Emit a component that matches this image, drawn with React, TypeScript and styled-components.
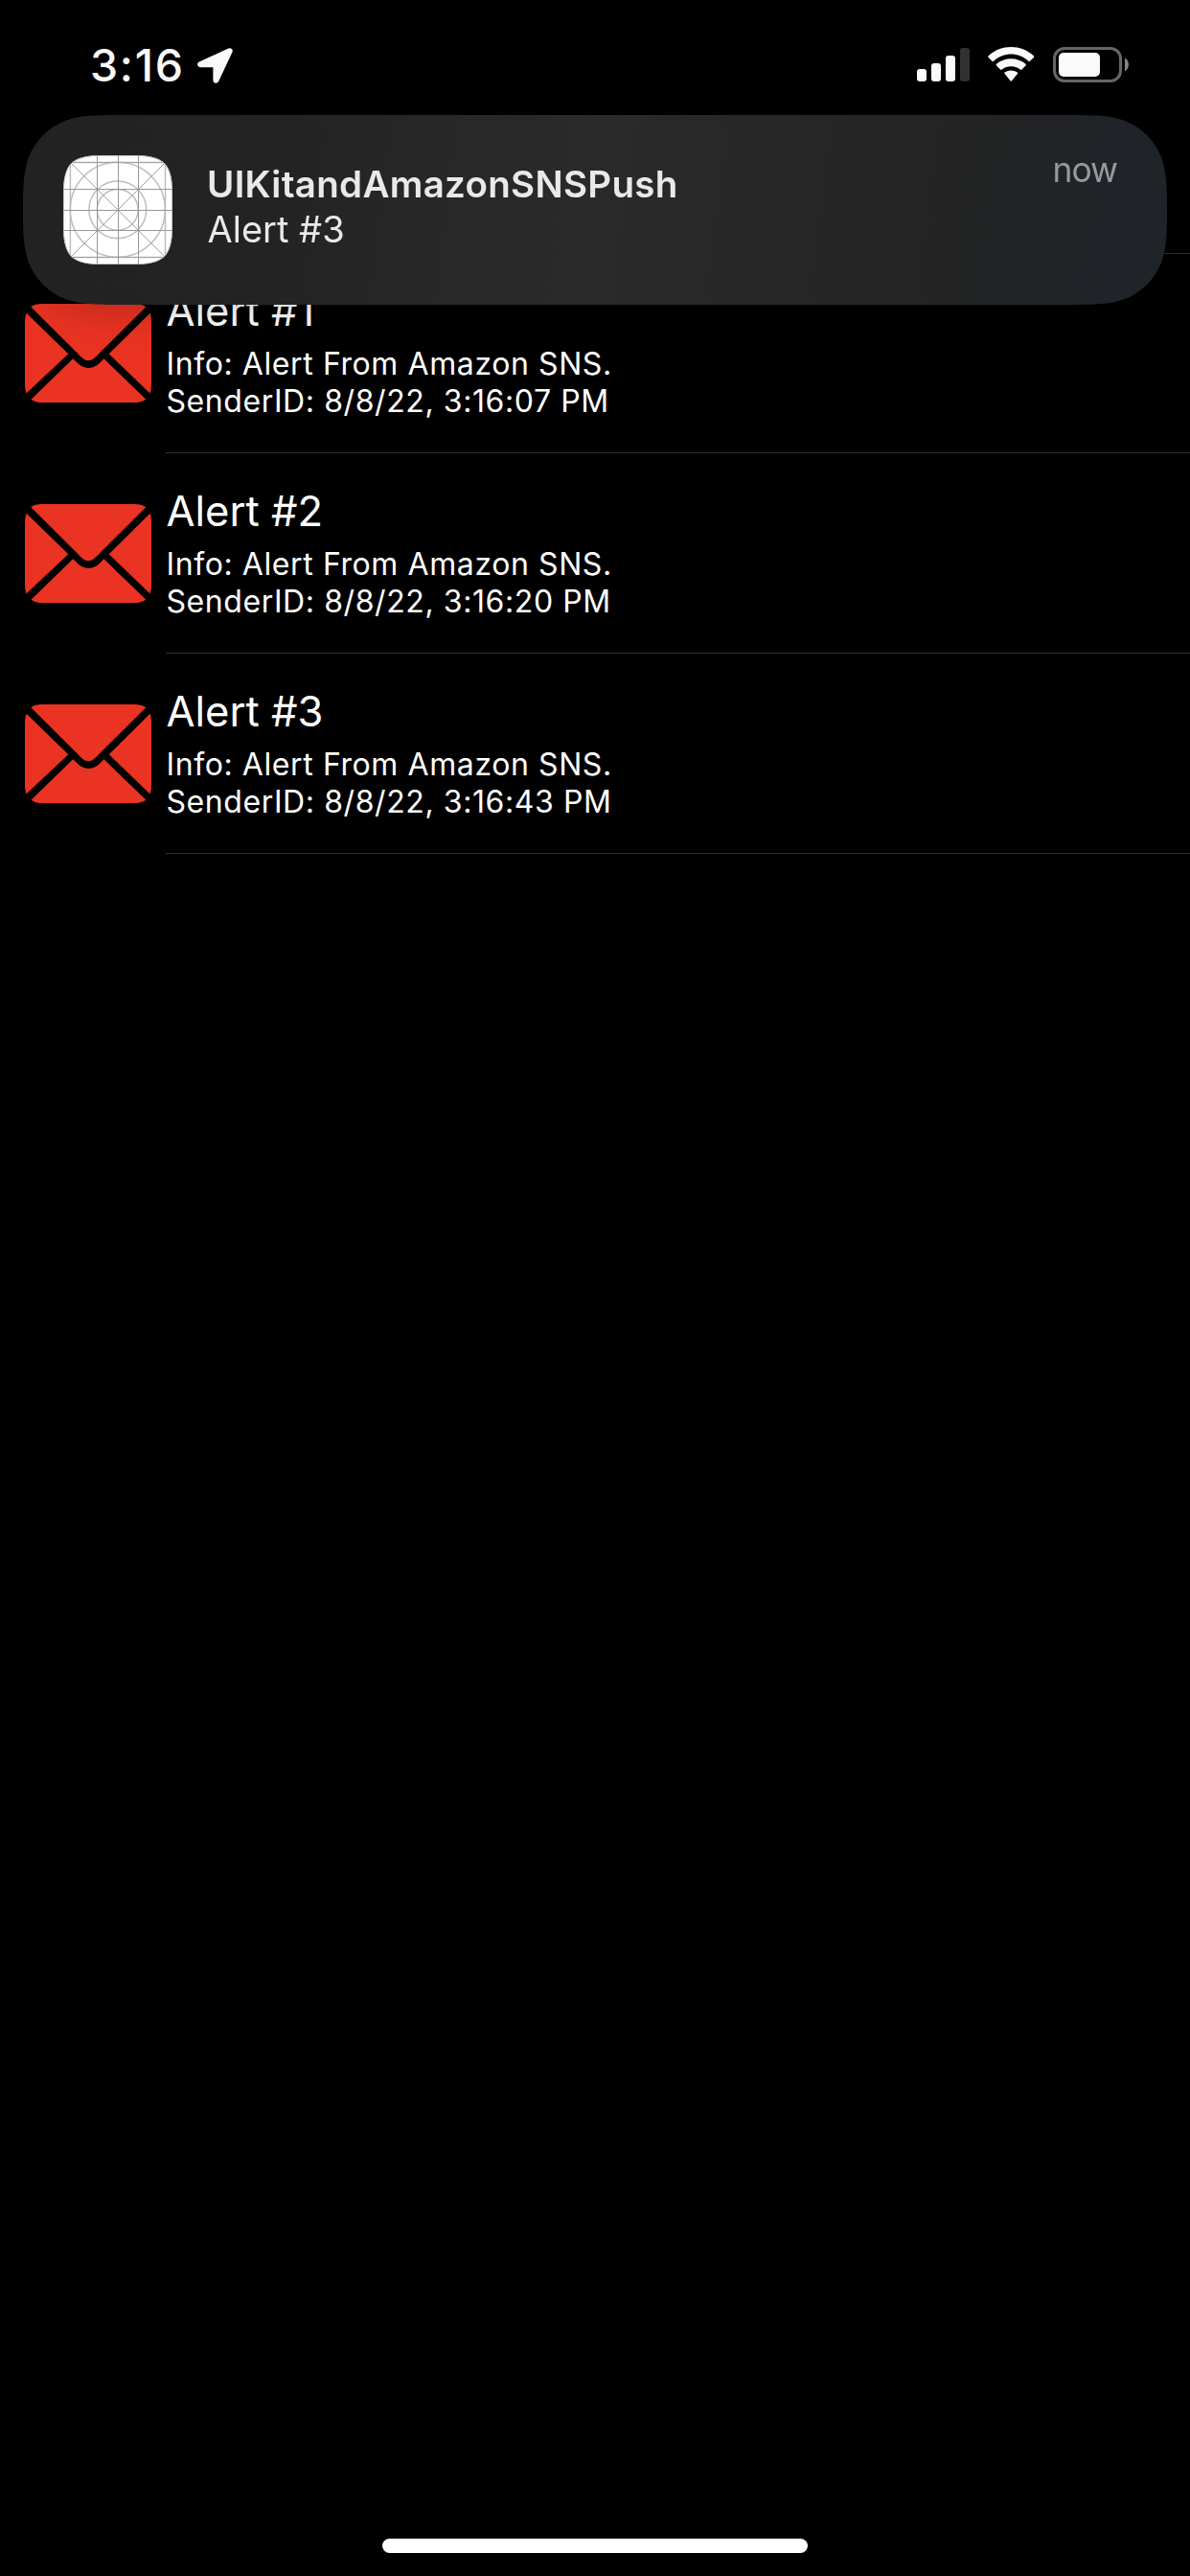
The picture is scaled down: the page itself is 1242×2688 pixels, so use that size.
import React from "react";
import styled, { createGlobalStyle } from "styled-components";

const GlobalStyle = createGlobalStyle`
  body {
    margin: 0;
    background: #000;
  }
`;

const Screen = styled.main`
  position: relative;
  display: flex;
  flex-direction: column;
  width: 1242px;
  height: 2688px;
  overflow: hidden;
  background: #000;
  color: #fff;
  font-family: Inter, "Liberation Sans", sans-serif;
`;

const StatusBar = styled.header`
  display: flex;
  align-items: flex-start;
  justify-content: space-between;
  height: 264px;
  flex: none;
  box-sizing: border-box;
  padding: 40px 64px 0 94px;
`;

const StatusLeft = styled.div`
  display: flex;
  align-items: flex-start;
`;

const Clock = styled.time`
  width: 112px;
  font-size: 46.5px;
  line-height: 56px;
  font-weight: 550;
  letter-spacing: 1.7px;
  color: #fafafa;
`;

const LocationIcon = styled.svg`
  width: 37px;
  height: 37px;
  margin-top: 10px;
`;

const StatusRight = styled.div`
  display: flex;
  align-items: flex-start;
  padding-top: 9px;
`;

const SignalIcon = styled.svg`
  width: 55px;
  height: 36px;
  margin-right: 19px;
`;

const WifiIcon = styled.svg`
  width: 50px;
  height: 37px;
  margin-right: 18px;
`;

const BatteryIcon = styled.svg`
  width: 79px;
  height: 37px;
`;

const List = styled.ul`
  display: flex;
  flex-direction: column;
  margin: 0;
  padding: 0;
  list-style: none;
`;

const Row = styled.li`
  display: flex;
  align-items: stretch;
  height: 209px;
  padding-left: 26px;
`;

const Envelope = styled.svg`
  width: 132px;
  height: 103px;
  margin: 53px 15px 0 0;
  flex: none;
`;

const RowBody = styled.div`
  flex: 1;
  box-sizing: border-box;
  border-bottom: 1px solid #303032;
  padding: 34px 0 0 0.5px;
`;

const RowTitle = styled.h2`
  margin: 0 0 10px;
  font-size: 43.5px;
  line-height: 52px;
  font-weight: 400;
  white-space: nowrap;
`;

const RowDetail = styled.p`
  margin: 0;
  font-size: 32px;
  line-height: 39px;
  letter-spacing: 0.59px;
  white-space: nowrap;
`;

const TopSeparator = styled.div`
  height: 1px;
  margin: 0 0 -1px 173px;
  background: #303032;
`;

const BannerShadow = styled.div`
  position: absolute;
  top: 120px;
  left: 24px;
  filter: drop-shadow(0 4px 22px rgba(0, 0, 0, 0.22));
`;

const Banner = styled.section`
  display: flex;
  box-sizing: border-box;
  width: 1194px;
  height: 198px;
  padding: 42px 52px 0 42px;
  background: linear-gradient(
    97deg,
    #222222 0%,
    #232323 22%,
    #282828 38%,
    #2a2a2a 50%,
    #272727 64%,
    #232423 80%,
    #222326 87%,
    #202428 94%,
    #1f2429 100%
  );
  clip-path: path(
    "M110 0 L1084 0 C1115.6 0 1131.5 0 1145.8 4.7 L1148.5 5.4 C1167.2 12.2 1181.8 26.8 1188.6 45.5 C1194 62.5 1194 78.4 1194 99 C1194 119.6 1194 135.5 1188.6 152.5 C1181.8 171.2 1167.2 185.8 1148.5 192.6 L1145.8 193.3 C1131.5 198 1115.6 198 1084 198 L110 198 C78.4 198 62.5 198 48.2 193.3 L45.5 192.6 C26.8 185.8 12.2 171.2 5.4 152.5 C0 135.5 0 119.6 0 99 C0 78.4 0 62.5 5.4 45.5 C12.2 26.8 26.8 12.2 45.5 5.4 L48.2 4.7 C62.5 0 78.4 0 110 0 Z"
  );
`;

const AppIcon = styled.svg`
  width: 114px;
  height: 114px;
  flex: none;
`;

const BannerText = styled.div`
  flex: 1;
  padding: 7px 0 0 36px;
  color: #e9e9e9;
  white-space: nowrap;
`;

const BannerTitle = styled.h1`
  margin: 0;
  font-size: 38.5px;
  line-height: 47px;
  font-weight: 600;
  letter-spacing: 0.3px;
`;

const BannerMessage = styled.p`
  margin: 0 0 0 0.5px;
  font-size: 38px;
  line-height: 47px;
`;

const BannerTime = styled.span`
  margin-top: -6px;
  font-size: 35.4px;
  line-height: 44px;
  letter-spacing: -1px;
  color: #97999d;
`;

const HomeIndicator = styled.div`
  width: 444px;
  height: 15px;
  margin: auto auto 24px 399px;
  border-radius: 8px;
  background: #fff;
`;

const alerts = [
  { title: "Alert #1", time: "8/8/22, 3:16:07 PM" },
  { title: "Alert #2", time: "8/8/22, 3:16:20 PM" },
  { title: "Alert #3", time: "8/8/22, 3:16:43 PM" },
];

const guides = [35.5, 57.5, 78.5];
const edges = [7.4, 106.5];

function EnvelopeIcon() {
  return (
    <Envelope viewBox="0 0 132 103" fill="#ea3323">
      <path d="M6.3 3.2C9 .9 13 0 18 0H114C119 0 123 .9 126.3 3.2L78 51.2C73.5 55.7 70.5 59.2 66.2 59.2C62 59.2 59 55.7 54.5 51.2Z" />
      <path d="M1.6 9.8L45.3 52.3L1.4 93.6C.4 90.5 0 87 0 83V20C0 16 .5 12.5 1.6 9.8Z" />
      <path d="M130.6 9.8L87.7 52.3L130.6 93.6C131.6 90.5 132 87 132 83V20C132 16 131.6 12.5 130.6 9.8Z" />
      <path d="M6.5 99.7L50.2 57.3L53 60C58 65 62 66.9 66.4 66.9C71 66.9 75 65 79.8 60L82.4 57.3L126.3 99.7C123 102.2 119 103 114 103H18C13 103 9.5 102.2 6.5 99.7Z" />
    </Envelope>
  );
}

function PlaceholderAppIcon() {
  return (
    <AppIcon viewBox="0 0 114 114">
      <defs>
        <clipPath id="app-icon-shape">
          <path d="M0 40C0 9 9 0 40 0H74C105 0 114 9 114 40V74C114 105 105 114 74 114H40C9 114 0 105 0 74Z" />
        </clipPath>
      </defs>
      <g clipPath="url(#app-icon-shape)" fill="none">
        <rect width="114" height="114" fill="#fff" />
        <g stroke="#bdbdbd" strokeWidth="1.5">
          {edges.map((p) => (
            <path key={p} d={`M${p} 7V107M7 ${p}H107`} />
          ))}
          <circle cx="56.8" cy="56.8" r="49.5" />
          <circle cx="56.8" cy="56.8" r="29.9" />
          <circle cx="56.8" cy="56.8" r="21.4" />
        </g>
        <g stroke="#979797" strokeWidth="1">
          {guides.map((p) => (
            <path key={p} d={`M${p} 0V114M0 ${p}H114`} />
          ))}
          <path d="M7 7.5H107M7 106.5H107" stroke="#a4a4a4" />
          <path d="M7.5 7.5L106.5 106.5M106.5 7.5L7.5 106.5" strokeWidth=".9" />
        </g>
        <path
          d="M0 40C0 9 9 0 40 0H74C105 0 114 9 114 40V74C114 105 105 114 74 114H40C9 114 0 105 0 74Z"
          stroke="#b0b0b0"
          strokeWidth="1.4"
        />
      </g>
    </AppIcon>
  );
}

export default function App() {
  return (
    <>
      <GlobalStyle />
      <Screen>
        <StatusBar>
          <StatusLeft>
            <Clock>3:16</Clock>
            <LocationIcon viewBox="0 0 37 37">
              <path
                d="M33.7 3.3L3.2 17.3H19.4V33.8Z"
                fill="#fafafa"
                stroke="#fafafa"
                strokeWidth="6"
                strokeLinejoin="round"
              />
            </LocationIcon>
          </StatusLeft>
          <StatusRight>
            <SignalIcon viewBox="0 0 55 36" fill="#fafafa">
              <rect x="0" y="23" width="10" height="13" rx="3" />
              <rect x="15" y="17" width="10" height="19" rx="3" />
              <rect x="30" y="9" width="10" height="27" rx="3" />
              <rect x="45" y="1" width="10" height="35" rx="3" fill="#313131" />
            </SignalIcon>
            <WifiIcon viewBox="0 0 50 37" fill="#fafafa">
              <path d="M.6 10.9C0 10.3 .1 9.7 .6 9.2C14.2-3 34.3-3 47.9 9.2C48.4 9.7 48.4 10.3 47.9 10.9L44 14.8C43.5 15.3 42.9 15.3 42.4 14.8C31.7 5.2 16.8 5.2 6.1 14.8C5.6 15.3 5 15.3 4.5 14.8Z" />
              <path d="M9 19.4C8.5 18.9 8.5 18.3 9 17.8C17.9 10.4 30.6 10.4 39.5 17.8C40 18.3 40 18.9 39.5 19.4L35.4 23.5C34.9 24 34.3 24 33.8 23.5C28.2 19.2 20.3 19.2 14.7 23.5C14.2 24 13.6 24 13.1 23.5Z" />
              <path d="M17.6 28C17.1 27.5 17.1 26.9 17.6 26.5C21.5 23.8 27 23.8 30.9 26.5C31.4 26.9 31.4 27.5 30.9 28L25 35.3C24.5 35.8 24 35.8 23.5 35.3Z" />
            </WifiIcon>
            <BatteryIcon viewBox="0 0 79 37">
              <rect
                x="1.5"
                y="1.5"
                width="69"
                height="34"
                rx="10.5"
                fill="none"
                stroke="#666"
                strokeWidth="3"
              />
              <rect x="6" y="6" width="43" height="25" rx="5" fill="#fafafa" />
              <path d="M75 11.5C80.2 13.8 80.2 23 75 25.3Z" fill="#858585" />
            </BatteryIcon>
          </StatusRight>
        </StatusBar>

        <TopSeparator />
        <List>
          {alerts.map((alert) => (
            <Row key={alert.title}>
              <EnvelopeIcon />
              <RowBody>
                <RowTitle>{alert.title}</RowTitle>
                <RowDetail>Info: Alert From Amazon SNS.</RowDetail>
                <RowDetail>SenderID: {alert.time}</RowDetail>
              </RowBody>
            </Row>
          ))}
        </List>

        <HomeIndicator />

        <BannerShadow>
          <Banner>
            <PlaceholderAppIcon />
            <BannerText>
              <BannerTitle>UIKitandAmazonSNSPush</BannerTitle>
              <BannerMessage>Alert #3</BannerMessage>
            </BannerText>
            <BannerTime>now</BannerTime>
          </Banner>
        </BannerShadow>
      </Screen>
    </>
  );
}
